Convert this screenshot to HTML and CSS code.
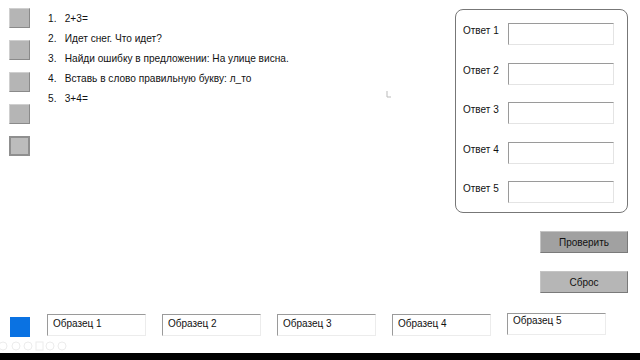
FILE: index.html
```html
<!doctype html>
<html>
<head>
<meta charset="utf-8">
<title>Тест</title>
<link rel="stylesheet" href="styles.css">
</head>
<body>
<div class="stage">
	<div class="top">
		<div class="marks">
			<span class="mark"></span>
			<span class="mark"></span>
			<span class="mark"></span>
			<span class="mark"></span>
			<span class="mark mark_on"></span>
		</div>

		<ul class="tasks">
			<li><b>1.</b><span>2+3=</span></li>
			<li><b>2.</b><span>Идет снег. Что идет?</span></li>
			<li><b>3.</b><span>Найди ошибку в предложении: На улице висна.</span></li>
			<li><b>4.</b><span>Вставь в слово правильную букву: л_то</span></li>
			<li><b>5.</b><span>3+4=</span></li>
		</ul>

		<div class="side">
			<div class="answers">
				<div class="row"><label>Ответ 1</label><span class="field"></span></div>
				<div class="row"><label>Ответ 2</label><span class="field"></span></div>
				<div class="row"><label>Ответ 3</label><span class="field"></span></div>
				<div class="row"><label>Ответ 4</label><span class="field"></span></div>
				<div class="row"><label>Ответ 5</label><span class="field"></span></div>
			</div>
			<div class="btn btn_check">Проверить</div>
			<div class="btn btn_reset">Сброс</div>
		</div>
	</div>

	<div class="samples">
		<span class="blue"></span>
		<div class="sample">Образец 1</div>
		<div class="sample">Образец 2</div>
		<div class="sample">Образец 3</div>
		<div class="sample">Образец 4</div>
		<div class="sample sample_last">Образец 5</div>
	</div>

	<div class="controls">
		<svg width="70" height="12" viewBox="0 0 70 12">
			<g fill="none" stroke="#ececec" stroke-width="1">
				<circle cx="3" cy="6" r="4"/>
				<circle cx="16" cy="6" r="4"/>
				<circle cx="28" cy="6" r="4"/>
				<rect x="36" y="2" width="7" height="8"/>
				<circle cx="50" cy="6" r="4"/>
				<circle cx="62" cy="6" r="4"/>
			</g>
		</svg>
	</div>

	<svg class="cursor" width="6" height="8" viewBox="0 0 6 8">
		<path d="M1 1 V7 H5" fill="none" stroke="#bbb" stroke-width="1"/>
	</svg>
</div>
<div class="bar"></div>
</body>
</html>
```

FILE: styles.css
```css
*{ margin:0; padding:0; box-sizing:border-box}
ul{ list-style:none}
html,body{ width:640px; height:360px; overflow:hidden; background:#fff}
body{ font-family:"Liberation Sans", Arial, sans-serif; color:#111}

.stage{ position:relative; height:353px; display:flex; flex-direction:column}
.bar{ height:7px; background:#000}

.top{ display:flex; align-items:flex-start}

.marks{ display:flex; flex-direction:column; gap:12px; padding:8px 0 0 9px; width:48px}
.mark{ display:block; width:21px; height:20px; background:#b5b5b5; border:1px solid; border-color:#cfcfcf #8a8a8a #8a8a8a #cfcfcf}
.mark_on{ background:#bcbcbc; border:2px solid #8f8f8f}

.tasks{ padding-top:8px; font-size:11.5px; transform:scaleX(0.88); transform-origin:left top}
.tasks li{ display:flex; height:20px; line-height:20px}
.tasks li b{ font-weight:normal; width:19px}

.side{ margin-left:auto; margin-right:12px; margin-top:9px; width:173px; display:flex; flex-direction:column; align-items:flex-end}
.answers{ width:173px; height:204px; border:1px solid #777; border-radius:8px; padding:13px 0 0 7px; display:flex; flex-direction:column; gap:17.5px}
.row{ display:flex; height:22px}
.row label{ width:45px; font-size:10px; line-height:14px; padding-top:1px}
.field{ display:block; width:106px; height:22px; border:1px solid; border-color:#9a9a9a #e4e4e4 #e4e4e4 #9a9a9a}

.btn{ width:88px; height:22px; line-height:21px; text-align:center; font-size:10px; border:1px solid; border-color:#c4c4c4 #7a7a7a #7a7a7a #c4c4c4}
.btn_check{ margin-top:18px; background:#a1a1a1}
.btn_reset{ margin-top:18px; background:#b6b6b6}

.samples{ margin-top:auto; display:flex; align-items:flex-start; gap:16px; padding-left:10px}
.blue{ display:block; width:20px; height:20px; margin-top:3px; margin-right:1px; background:#0a72e2}
.sample{ width:99px; height:22px; font-size:10px; padding:2px 0 0 5px; line-height:14px; border:1px solid; border-color:#9a9a9a #ececec #ececec #9a9a9a}
.sample_last{ margin-top:-1px; padding-top:0}

.controls{ height:16px; padding-top:3px}
.controls svg{ display:block}

.cursor{ position:absolute; left:386px; top:90px}
```
